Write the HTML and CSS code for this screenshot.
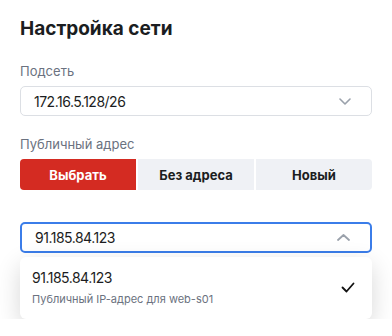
FILE: index.html
```html
<!DOCTYPE html>
<html lang="ru">
<head>
    <meta charset="UTF-8">
    <meta name="viewport" content="width=device-width, initial-scale=1.0">
    <title>Настройка сети</title>
    <link rel="stylesheet" href="styles.css">
</head>
<body>
    <div class="panel">
        <h1>Настройка сети</h1>

        <div class="field">
            <div class="label">Подсеть</div>
            <div class="select">
                <span class="value">172.16.5.128/26</span>
                <svg class="chevron" width="12" height="7" viewBox="0 0 12 7">
                    <path d="M1 1l5 5 5-5" fill="none" stroke="#9aa1ab" stroke-width="1.6" stroke-linecap="round" stroke-linejoin="round"/>
                </svg>
            </div>
        </div>

        <div class="field">
            <div class="label">Публичный адрес</div>
            <div class="segmented">
                <button class="seg active">Выбрать</button>
                <button class="seg">Без адреса</button>
                <button class="seg">Новый</button>
            </div>
        </div>

        <div class="combo">
            <div class="select open">
                <span class="value">91.185.84.123</span>
                <svg class="chevron" width="13" height="7" viewBox="0 0 13 7">
                    <path d="M1 6l5.5-5 5.5 5" fill="none" stroke="#9aa1ab" stroke-width="1.8" stroke-linecap="round" stroke-linejoin="round"/>
                </svg>
            </div>
            <div class="menu">
                <div class="option">
                    <div class="option-text">
                        <div class="option-title value">91.185.84.123</div>
                        <div class="option-sub">Публичный IP-адрес для web-s01</div>
                    </div>
                    <svg class="check" width="14" height="11" viewBox="0 0 14 11">
                        <path d="M1.5 5.5l4 4 7-8" fill="none" stroke="#111" stroke-width="1.8" stroke-linecap="round" stroke-linejoin="round"/>
                    </svg>
                </div>
            </div>
        </div>
    </div>
</body>
</html>
```

FILE: styles.css
```css
body {
    margin: 0;
    font-family: Inter, "Noto Sans", sans-serif;
    background: #fff;
    color: #1b1d21;
}
.panel {
    padding: 17px 20px 0;
}
h1 {
    font-size: 19px;
    font-weight: 700;
    line-height: 24px;
    margin: 0 0 22px;
}
.field {
    margin-bottom: 20px;
}
.label {
    font-size: 13px;
    line-height: 16px;
    color: #6b7280;
    margin-bottom: 7px;
}
.value {
    font-size: 14px;
    letter-spacing: -0.5px;
}
.select {
    display: flex;
    align-items: center;
    justify-content: space-between;
    height: 30px;
    box-sizing: border-box;
    padding: 0 20px 0 13px;
    border: 1.5px solid #dcdfe4;
    border-radius: 5px;
}
.segmented {
    display: grid;
    grid-template-columns: 1fr 1fr 1fr;
    gap: 2px;
    height: 31px;
}
.seg {
    border: none;
    background: #eff1f5;
    font-family: inherit;
    font-size: 13px;
    font-weight: 700;
    color: #1b1d21;
    padding: 0;
}
.seg:first-child {
    border-radius: 4px 0 0 4px;
}
.seg:last-child {
    border-radius: 0 4px 4px 0;
}
.seg.active {
    background: #d42b22;
    color: #fff;
}
.combo {
    margin-top: 32px;
}
.select.open {
    height: 31px;
    border: 2px solid #3b7de9;
    padding-left: 13px;
}
.menu {
    margin-top: 4px;
    background: #fff;
    border-radius: 6px;
    box-shadow: 0 8px 24px rgba(0, 0, 0, 0.16);
}
.option {
    display: flex;
    align-items: center;
    justify-content: space-between;
    padding: 11px 17px 12px 12px;
}
.option-title {
    line-height: 20px;
}
.option-sub {
    font-size: 11px;
    line-height: 16px;
    color: #6b7280;
    margin-top: 3px;
}
```
